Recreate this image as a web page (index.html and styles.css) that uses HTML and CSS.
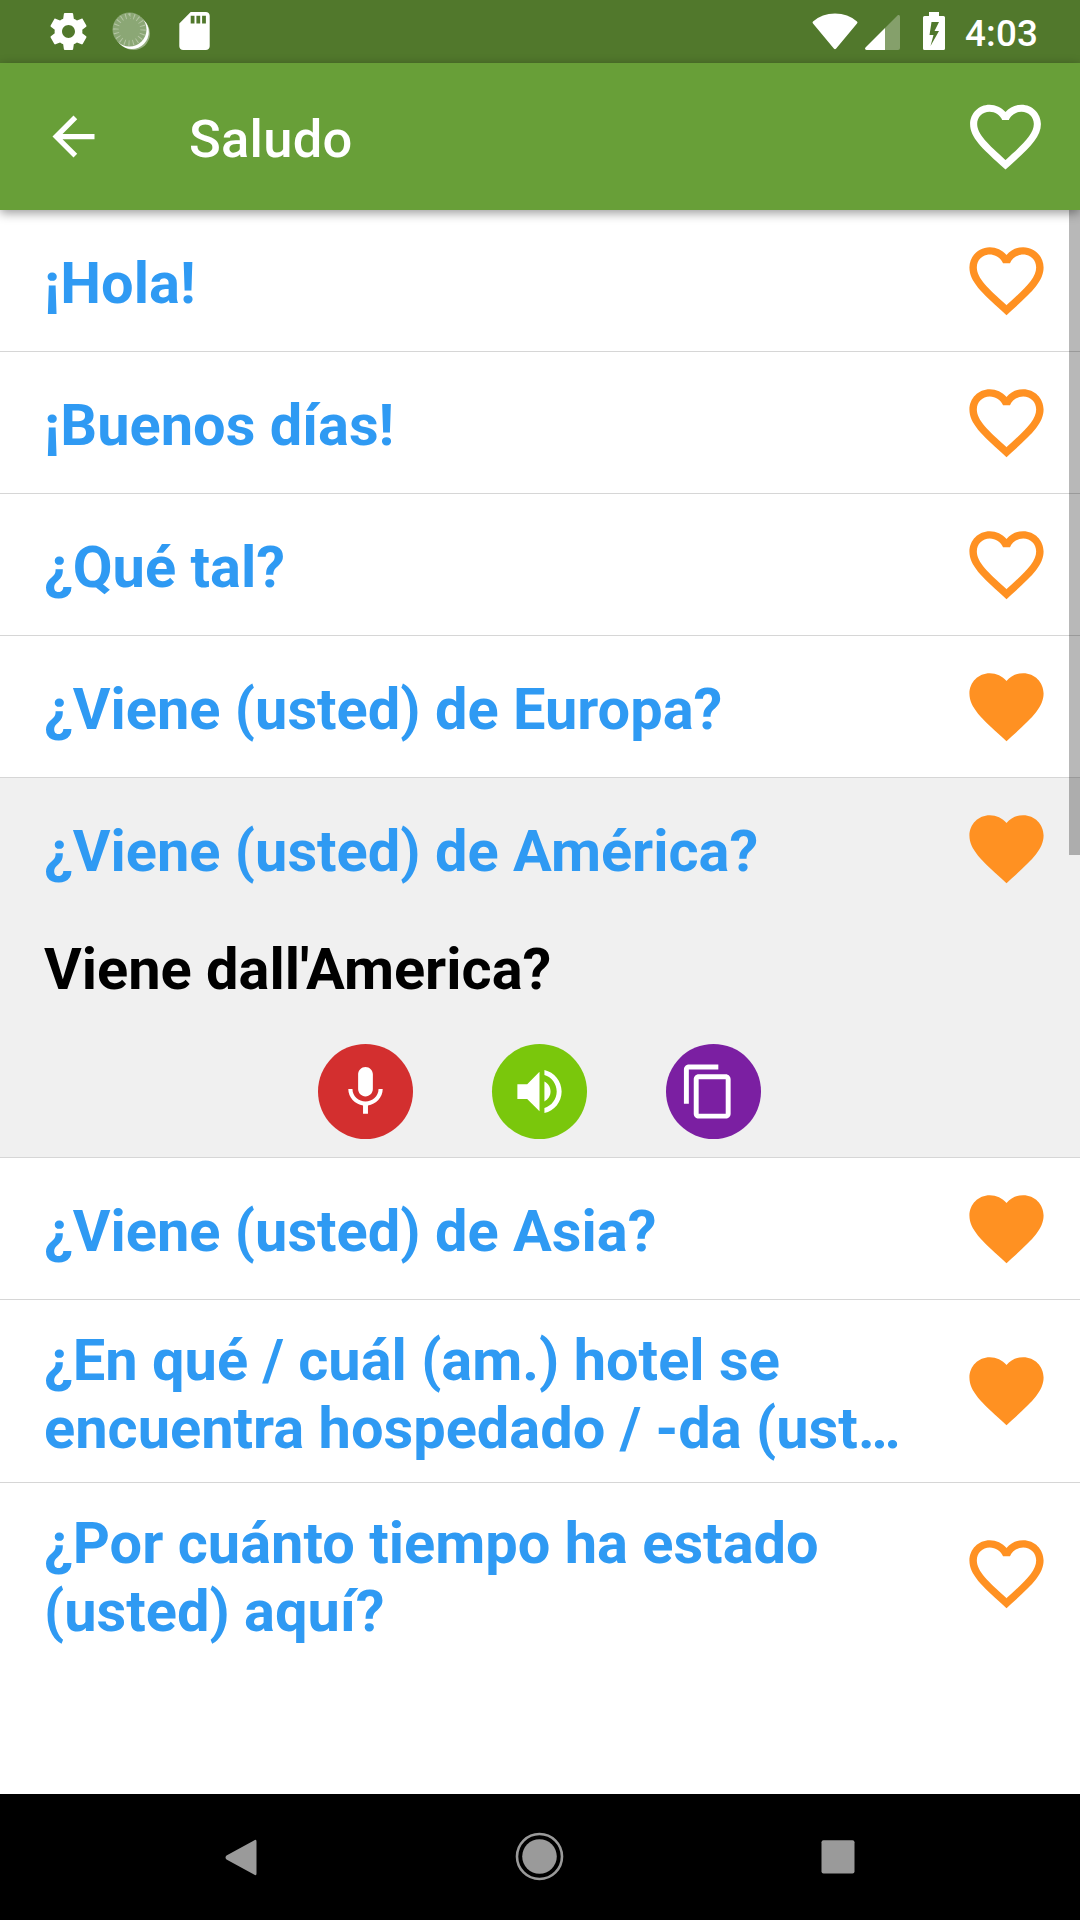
FILE: index.html
```html
<!DOCTYPE html>
<html lang="es">
<head>
<meta charset="utf-8">
<title>Saludo</title>
<link rel="stylesheet" href="styles.css">
</head>
<body>
<svg class="defs" aria-hidden="true">
  <symbol id="heart" viewBox="0 0 24 24"><path d="M12 21.35l-1.45-1.32C5.4 15.36 2 12.28 2 8.5 2 5.42 4.42 3 7.5 3c1.74 0 3.41.81 4.5 2.09C13.09 3.81 14.76 3 16.5 3 19.58 3 22 5.42 22 8.5c0 3.78-3.4 6.86-8.55 11.54L12 21.35z"/></symbol>
  <symbol id="heart-outline" viewBox="0 0 24 24"><path d="M16.5 3c-1.74 0-3.41.81-4.5 2.09C10.91 3.81 9.24 3 7.5 3 4.42 3 2 5.42 2 8.5c0 3.78 3.4 6.86 8.55 11.54L12 21.35l1.45-1.32C18.6 15.36 22 12.28 22 8.5 22 5.42 19.58 3 16.5 3zm-4.4 15.55l-.1.1-.1-.1C7.14 14.24 4 11.39 4 8.5 4 6.5 5.5 5 7.5 5c1.54 0 3.04.99 3.57 2.36h1.87C13.46 5.99 14.96 5 16.5 5c2 0 3.5 1.5 3.5 3.5 0 2.89-3.14 5.74-7.9 10.05z"/></symbol>
</svg>
<div class="screen">
  <div class="status-bar">
    <svg class="status-gear" viewBox="2 2 20 20"><path d="M19.43 12.98c.04-.32.07-.64.07-.98s-.03-.66-.07-.98l2.11-1.65c.19-.15.24-.42.12-.64l-2-3.46c-.12-.22-.39-.3-.61-.22l-2.49 1c-.52-.4-1.08-.73-1.69-.98l-.38-2.65C14.46 2.18 14.25 2 14 2h-4c-.25 0-.46.18-.49.42l-.38 2.65c-.61.25-1.17.59-1.69.98l-2.49-1c-.23-.09-.49 0-.61.22l-2 3.46c-.13.22-.07.49.12.64l2.11 1.65c-.04.32-.07.65-.07.98s.03.66.07.98l-2.11 1.65c-.19.15-.24.42-.12.64l2 3.46c.12.22.39.3.61.22l2.49-1c.52.4 1.08.73 1.69.98l.38 2.65c.03.24.24.42.49.42h4c.25 0 .46-.18.49-.42l.38-2.65c.61-.25 1.17-.59 1.69-.98l2.49 1c.23.09.49 0 .61-.22l2-3.46c.12-.22.07-.49-.12-.64l-2.11-1.65zM12 15.5c-1.93 0-3.5-1.57-3.5-3.5s1.57-3.5 3.5-3.5 3.5 1.57 3.5 3.5-1.57 3.5-3.5 3.5z"/></svg>
    <svg class="status-sync" viewBox="0 0 38 38">
      <circle cx="20.500" cy="20.500" r="16.500" opacity=".4"/>
      <circle cx="18.800" cy="19" r="17"/>
      <circle class="sync-disc" cx="16.500" cy="16.500" r="17"/>
      <circle class="sync-ticks" cx="16.500" cy="16.500" r="13.500" pathLength="120"/>
    </svg>
    <svg class="status-sd" viewBox="4 2 16 20"><path d="M18 2h-8L4.020 8 4 20c0 1.100.9 2 2 2h12c1.100 0 2-.9 2-2V4c0-1.100-.9-2-2-2zm-6 6h-2V4h2v4zm3 0h-2V4h2v4zm3 0h-2V4h2v4z"/></svg>
    <svg class="status-wifi" viewBox="0 0 46 37"><path d="M1 8.500Q10 .500 23 .500T45 8.500Q46 9.500 45 10.500L24.200 35.500Q23 36.800 21.800 35.500L1 10.500Q0 9.500 1 8.500z"/></svg>
    <svg class="status-signal" viewBox="0 0 35 35"><path opacity=".3" d="M33 0q2-.5 2 2v31q0 2-2 2H20V13z"/><path d="M20 13v22H1.500Q-.800 34.500.500 32.500z"/></svg>
    <svg class="status-battery" viewBox="0 0 22 38"><path fill-rule="evenodd" d="M6 0h10v4h4.500q1.500 0 1.500 1.500v31q0 1.500-1.500 1.500h-19q-1.500 0-1.500-1.500v-31q0-1.500 1.500-1.500H6zM8.500 10L6.500 23h4L7.500 34 16 19h-4.500L16 10z"/></svg>
    <span class="clock">4:03</span>
  </div>
  <header class="app-bar">
    <svg class="back" viewBox="0 0 24 24"><path d="M20 11H7.830l5.590-5.590L12 4l-8 8 8 8 1.410-1.410L7.830 13H20v-2z"/></svg>
    <h1 class="title">Saludo</h1>
    <svg class="app-heart"><use href="#heart-outline"/></svg>
  </header>
  <main class="list">
    <section class="item"><div class="row"><p class="phrase">¡Hola!</p><svg class="fav"><use href="#heart-outline"/></svg></div></section>
    <section class="item"><div class="row"><p class="phrase">¡Buenos días!</p><svg class="fav"><use href="#heart-outline"/></svg></div></section>
    <section class="item"><div class="row"><p class="phrase">¿Qué tal?</p><svg class="fav"><use href="#heart-outline"/></svg></div></section>
    <section class="item"><div class="row"><p class="phrase">¿Viene (usted) de Europa?</p><svg class="fav"><use href="#heart"/></svg></div></section>
    <section class="item item-open">
      <div class="row"><p class="phrase">¿Viene (usted) de América?</p><svg class="fav"><use href="#heart"/></svg></div>
      <p class="translation">Viene dall'America?</p>
      <div class="actions">
        <button class="action action-mic"><svg class="glyph" viewBox="0 0 24 24"><path d="M12 14c1.660 0 2.990-1.340 2.990-3L15 5c0-1.660-1.340-3-3-3S9 3.340 9 5v6c0 1.660 1.340 3 3 3zm5.300-3c0 3-2.540 5.100-5.300 5.100S6.700 14 6.700 11H5c0 3.410 2.720 6.230 6 6.720V21h2v-3.280c3.280-.48 6-3.300 6-6.720h-1.700z"/></svg></button>
        <button class="action action-speak"><svg class="glyph" viewBox="0 0 24 24"><path d="M3 9v6h4l5 5V4L7 9H3zm13.500 3c0-1.770-1.020-3.290-2.500-4.030v8.050c1.480-.73 2.500-2.250 2.500-4.020zM14 3.230v2.060c2.890.86 5 3.540 5 6.710s-2.110 5.850-5 6.710v2.060c4.010-.91 7-4.490 7-8.770s-2.990-7.860-7-8.770z"/></svg></button>
        <button class="action action-copy"><svg class="glyph" viewBox="0 0 24 24"><path d="M16 1H4c-1.100 0-2 .9-2 2v14h2V3h12V1zm3 4H8c-1.100 0-2 .9-2 2v14c0 1.100.9 2 2 2h11c1.100 0 2-.9 2-2V7c0-1.100-.9-2-2-2zm0 16H8V7h11v14z"/></svg></button>
      </div>
    </section>
    <section class="item"><div class="row"><p class="phrase">¿Viene (usted) de Asia?</p><svg class="fav"><use href="#heart"/></svg></div></section>
    <section class="item"><div class="row row-tall"><p class="phrase">¿En qué / cuál (am.) hotel se<br>encuentra hospedado / -da (ust…</p><svg class="fav"><use href="#heart"/></svg></div></section>
    <section class="item"><div class="row row-tall"><p class="phrase">¿Por cuánto tiempo ha estado<br>(usted) aquí?</p><svg class="fav"><use href="#heart-outline"/></svg></div></section>
    <div class="scrollbar"></div>
  </main>
  <nav class="nav-bar">
    <svg class="nav-icon" viewBox="0 0 60 60"><path d="M43 13.500Q45.500 11.500 45.500 14.500v32q0 3-2.500 1L15.500 32.500q-2-2 0-4z"/></svg>
    <svg class="nav-icon" viewBox="0 0 60 60"><circle cx="29.500" cy="29.500" r="17.300"/><circle class="ring" cx="29.500" cy="29.500" r="22.500"/></svg>
    <svg class="nav-icon" viewBox="0 0 60 60"><rect x="12.500" y="13.300" width="33" height="33.300" rx="2"/></svg>
  </nav>
</div>
</body>
</html>
```
FILE: styles.css
```css
* { box-sizing: border-box; margin: 0; padding: 0; }

body {
  width: 1080px;
  height: 1920px;
  overflow: hidden;
  font-family: Roboto, "Noto Sans", sans-serif;
  background: #fff;
}

svg { display: block; flex: none; fill: #fff; }
.defs { display: none; }

.screen { display: flex; flex-direction: column; height: 1920px; }

.status-bar {
  display: flex;
  align-items: flex-start;
  height: 63px;
  padding: 12px 0 0 50px;
  background: #51782c;
}
.status-gear { width: 37px; height: 39px; }
.status-sync { width: 38px; height: 38px; margin-left: 26px; margin-top: 1px; overflow: visible; }
.sync-disc { fill: #8ba775; }
.sync-ticks { fill: none; stroke: #b4c5a3; stroke-width: 5.500; stroke-dasharray: 1.400 4.600; }
.status-sd { width: 31px; height: 38px; margin-left: 28px; }
.status-wifi { width: 46px; height: 37px; margin: 1px 0 0 602px; }
.status-signal { width: 35px; height: 35px; margin: 3px 0 0 7px; }
.status-battery { width: 22px; height: 38px; margin-left: 23px; }
.clock {
  margin-left: 20px;
  font-size: 36.750px;
  line-height: 44px;
  font-weight: 500;
  letter-spacing: .2px;
  color: #fff;
}

.app-bar {
  display: flex;
  align-items: center;
  height: 147px;
  padding: 0 32px 1px 42px;
  background: #689f38;
  box-shadow: 0 3px 10px rgba(0, 0, 0, .4);
  z-index: 1;
}
.back { width: 63px; height: 63px; }
.title {
  flex: 1;
  margin-left: 84px;
  padding-top: 5px;
  font-size: 52.500px;
  line-height: 62px;
  font-weight: 500;
  letter-spacing: .25px;
  color: #fff;
}
.app-heart { width: 85px; height: 85px; }

.list { position: relative; flex: 1; }
.item + .item { border-top: 1px solid #d6d6d6; }
.item-open { height: 380px; background: #f0f0f0; }
.row {
  display: flex;
  align-items: center;
  justify-content: space-between;
  height: 141px;
  padding: 0 29px 0 44px;
}
.row-tall { height: 182px; padding-bottom: 1px; }
.phrase, .translation {
  font-size: 57.750px;
  line-height: 68px;
  font-weight: 700;
  white-space: nowrap;
}
.phrase { padding-top: 5px; color: #2f9af3; }
.row-tall .phrase { padding-top: 7px; }
.fav { width: 89px; height: 89px; fill: #ff9122; }

.translation { padding: 16px 0 0 44px; color: #000; }
.actions { display: flex; justify-content: center; gap: 79px; margin-top: 41px; padding-right: 2px; }
.action {
  display: grid;
  place-items: center;
  width: 95px;
  height: 95px;
  border: 0;
  border-radius: 50%;
}
.glyph { width: 59px; height: 59px; }
.action-mic { background: #d32f2f; }
.action-speak { background: #7ac70c; }
.action-copy { background: #7b1fa2; padding-right: 10px; }

.scrollbar {
  position: absolute;
  top: 0;
  right: 0;
  width: 11px;
  height: 645px;
  background: rgba(0, 0, 0, .28);
}

.nav-bar {
  display: flex;
  align-items: center;
  justify-content: space-between;
  height: 126px;
  padding: 0 211px;
  background: #000;
}
.nav-icon { width: 60px; height: 60px; fill: #9a9a9a; }
.ring { fill: none; stroke: #9a9a9a; stroke-width: 2.600; }
```
